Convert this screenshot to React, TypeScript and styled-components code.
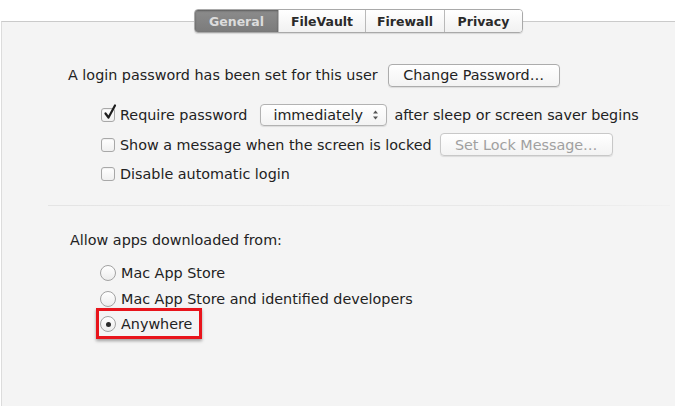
import React from 'react';
import styled, { createGlobalStyle } from 'styled-components';

const GlobalStyle = createGlobalStyle`
  html, body {
    margin: 0;
    padding: 0;
    background: #ffffff;
  }

  body {
    font-family: 'DejaVu Sans', 'Liberation Sans', sans-serif;
    font-size: 14.35px;
    color: #222;
  }
`;

const Window = styled.div`
  width: 675px;
  height: 406px;
  padding-top: 9px;
  box-sizing: border-box;
  overflow: hidden;
  display: flex;
  flex-direction: column;
`;

const TabBar = styled.div`
  position: relative;
  z-index: 1;
  display: flex;
  align-self: flex-start;
  margin-left: 194px;
  margin-bottom: -12px;
  height: 24px;
  border: 1px solid #a9a9a9;
  border-radius: 4px;
  box-sizing: border-box;
  overflow: hidden;
  box-shadow: 0 1px 1px rgba(0, 0, 0, 0.12);
`;

const Tab = styled.div<{ $active?: boolean; $width: number }>`
  width: ${(p) => p.$width}px;
  display: flex;
  align-items: center;
  justify-content: center;
  font-size: 12.5px;
  font-weight: bold;
  box-sizing: border-box;
  color: ${(p) => (p.$active ? '#dcdcdc' : '#2a2a2a')};
  background: ${(p) =>
    p.$active
      ? 'linear-gradient(#8c8c8c, #7b7b7b)'
      : 'linear-gradient(#ffffff, #f1f1f1)'};
  box-shadow: ${(p) => (p.$active ? 'inset 0 1px 2px rgba(0,0,0,0.35)' : 'none')};

  & + & {
    border-left: 1px solid #b9b9b9;
  }
`;

const Panel = styled.div`
  flex: 1;
  margin-left: 1px;
  background: #f4f4f4;
  border-top: 1px solid #cacaca;
  border-left: 1px solid #dcdcdc;
  padding-top: 41px;
`;

const Section = styled.div<{ $indent: number }>`
  padding-left: ${(p) => p.$indent}px;
`;

const Row = styled.div<{ $gap?: number }>`
  display: flex;
  align-items: center;
  height: 24px;
  gap: ${(p) => p.$gap ?? 10}px;
  white-space: nowrap;
`;

const Options = styled.div`
  display: flex;
  flex-direction: column;
  gap: 5.5px;
  padding-left: 33px;
  margin-top: 16px;
`;

const Label = styled.label`
  display: flex;
  align-items: center;
  gap: 5px;
`;

const Text = styled.span<{ $dim?: boolean }>`
  color: ${(p) => (p.$dim ? '#9a9a9a' : '#222')};
`;

const Button = styled.div<{ $width: number; $disabled?: boolean }>`
  width: ${(p) => p.$width}px;
  height: 23px;
  box-sizing: border-box;
  display: flex;
  align-items: center;
  justify-content: center;
  border: 1px solid ${(p) => (p.$disabled ? '#c8c8c8' : '#acacac')};
  border-radius: 4px;
  background: linear-gradient(#ffffff, #f3f3f3);
  box-shadow: 0 1px 1px rgba(0, 0, 0, 0.1);
  color: ${(p) => (p.$disabled ? '#a0a0a0' : '#222')};
`;

const Popup = styled.div`
  width: 127px;
  height: 22px;
  margin-left: 6px;
  box-sizing: border-box;
  display: flex;
  align-items: center;
  justify-content: space-between;
  padding: 0 7px 0 12px;
  border: 1px solid #b2b2b2;
  border-radius: 4px;
  background: linear-gradient(#ffffff, #f3f3f3);
  box-shadow: 0 1px 1px rgba(0, 0, 0, 0.1);
`;

const Stepper = styled.svg`
  width: 7px;
  height: 12px;
`;

const Box = styled.span`
  position: relative;
  width: 14px;
  height: 14px;
  box-sizing: border-box;
  border: 1px solid #a8a8a8;
  border-radius: 3px;
  background: linear-gradient(#ffffff, #f0f0f0);
  box-shadow: inset 0 1px 1px rgba(0, 0, 0, 0.06);
  flex-shrink: 0;
`;

const Check = styled.svg`
  position: absolute;
  left: 1px;
  top: -5px;
  width: 14px;
  height: 16px;
`;

const Divider = styled.div`
  height: 1px;
  margin: 19px 5px 0 46px;
  background: linear-gradient(90deg, #e4e4e4, #e9e9e9 80%, #f0f0f0);
`;

const AllowLabel = styled.div`
  padding-left: 68px;
  margin-top: 24px;
  height: 20px;
  display: flex;
  align-items: center;
`;

const Radios = styled.div`
  display: flex;
  flex-direction: column;
  gap: 1.5px;
  padding-left: 98px;
  margin-top: 11px;
`;

const RadioRow = styled.div`
  position: relative;
  display: flex;
  align-items: center;
  gap: 5px;
  height: 24px;
  white-space: nowrap;
`;

const Radio = styled.span<{ $on?: boolean }>`
  width: 16px;
  height: 16px;
  box-sizing: border-box;
  border-radius: 50%;
  border: 1px solid #a2a2a2;
  background: linear-gradient(#ffffff, #ececec);
  display: flex;
  align-items: center;
  justify-content: center;
  flex-shrink: 0;

  &::after {
    content: '';
    display: ${(p) => (p.$on ? 'block' : 'none')};
    width: 5px;
    height: 5px;
    border-radius: 50%;
    background: #2b2b2b;
  }
`;

const Highlight = styled.div`
  position: absolute;
  left: -4px;
  top: -4px;
  width: 106px;
  height: 31px;
  box-sizing: border-box;
  border: 3px solid #e8141b;
  box-shadow: 0 2px 3px rgba(0, 0, 0, 0.35);
  pointer-events: none;
`;

const Checkbox = ({ checked }: { checked?: boolean }) => (
  <Box>
    {checked && (
      <Check viewBox="0 0 14 16">
        <path d="M2.5 9.5 L5.5 13.5 L12 1.5" fill="none" stroke="#1e1e1e" strokeWidth="2.2" strokeLinecap="round" strokeLinejoin="round" />
      </Check>
    )}
  </Box>
);

const tabs = [
  { name: 'General', width: 83 },
  { name: 'FileVault', width: 87 },
  { name: 'Firewall', width: 79 },
  { name: 'Privacy', width: 78 }
];

const App = () => {
  return (
    <Window>
      <GlobalStyle />
      <TabBar>
        {tabs.map((tab, i) => (
          <Tab key={tab.name} $width={tab.width} $active={i === 0}>
            {tab.name}
          </Tab>
        ))}
      </TabBar>

      <Panel>
        <Section $indent={66}>
          <Row $gap={10}>
            <Text>A login password has been set for this user</Text>
            <Button $width={172}>Change Password…</Button>
          </Row>
        </Section>

        <Section $indent={66}>
          <Options>
            <Row $gap={7}>
              <Label>
                <Checkbox checked />
                <Text>Require password</Text>
              </Label>
              <Popup>
                <span>immediately</span>
                <Stepper viewBox="0 0 7 12">
                  <path d="M1 4.5 L3.5 1.5 L6 4.5 Z" fill="#555" />
                  <path d="M1 7.5 L3.5 10.5 L6 7.5 Z" fill="#555" />
                </Stepper>
              </Popup>
              <Text>after sleep or screen saver begins</Text>
            </Row>
            <Row $gap={8}>
              <Label>
                <Checkbox />
                <Text>Show a message when the screen is locked</Text>
              </Label>
              <Button $width={173} $disabled>
                Set Lock Message…
              </Button>
            </Row>
            <Row>
              <Label>
                <Checkbox />
                <Text>Disable automatic login</Text>
              </Label>
            </Row>
          </Options>
        </Section>

        <Divider />

        <AllowLabel>Allow apps downloaded from:</AllowLabel>

        <Radios>
          <RadioRow>
            <Radio />
            <Text>Mac App Store</Text>
          </RadioRow>
          <RadioRow>
            <Radio />
            <Text>Mac App Store and identified developers</Text>
          </RadioRow>
          <RadioRow>
            <Radio $on />
            <Text>Anywhere</Text>
            <Highlight />
          </RadioRow>
        </Radios>
      </Panel>
    </Window>
  );
};

export default App;
